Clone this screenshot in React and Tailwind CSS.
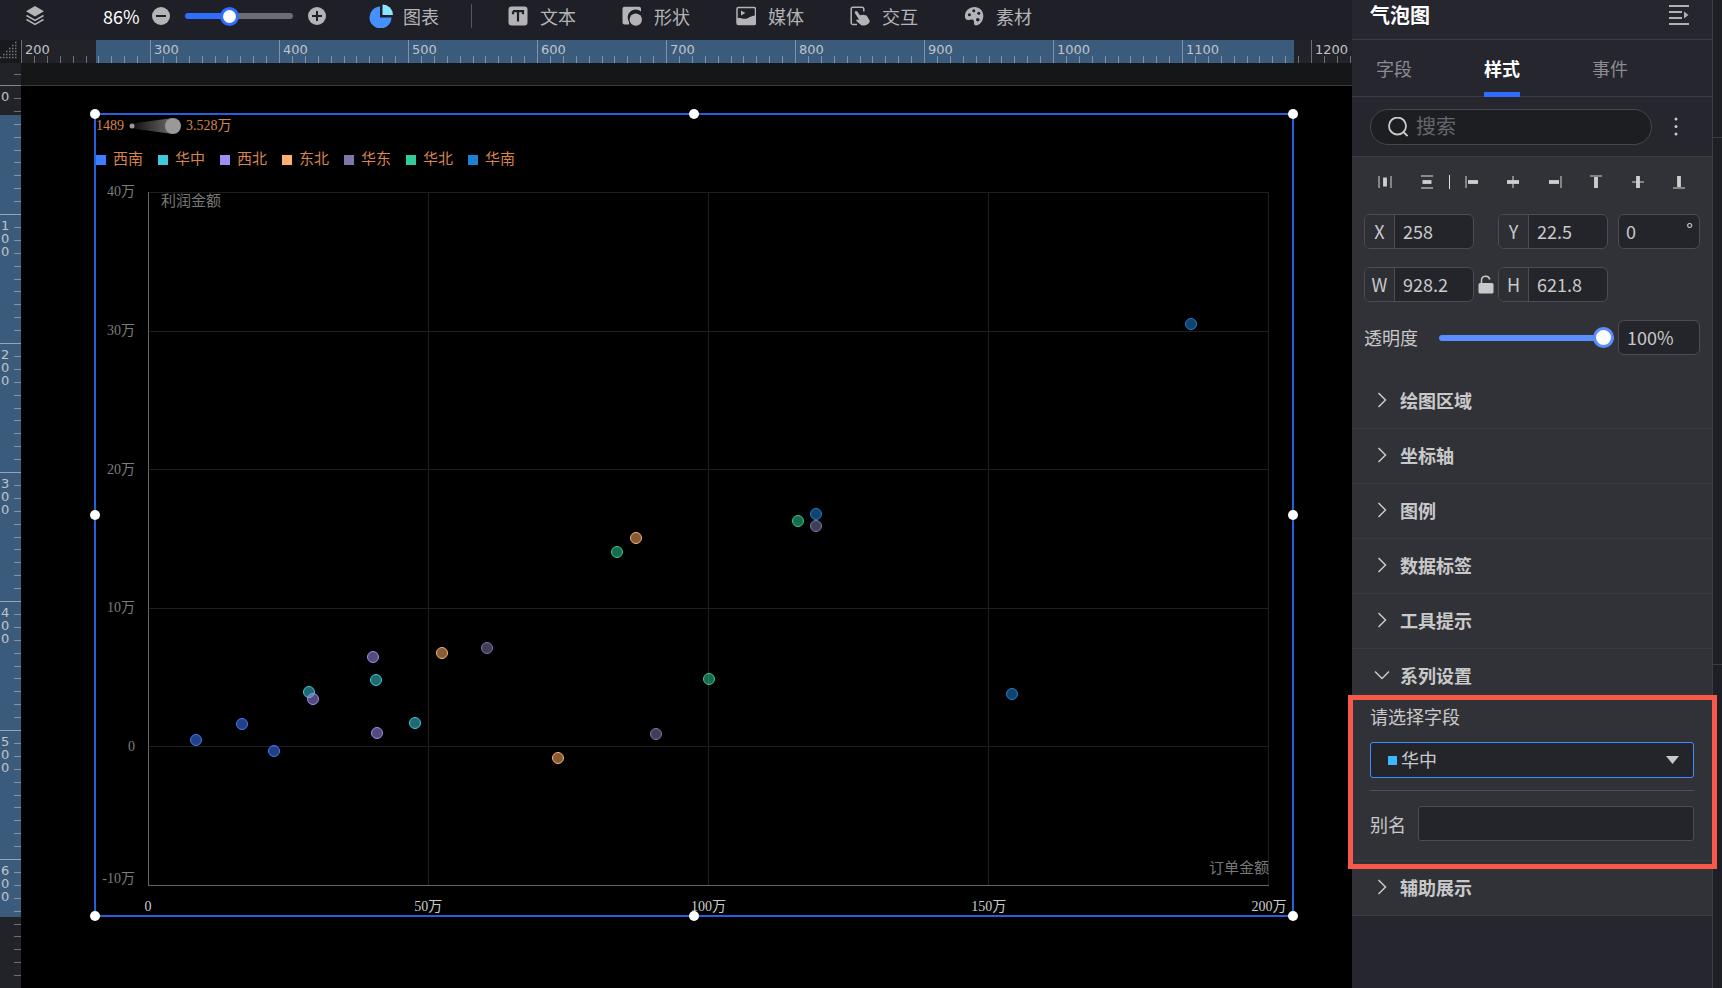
import { useState } from "react";

const SERIES = [
  { name: "西南", color: "#3d7dff", points: [[8.5, 0.5], [16.7, 1.7], [22.4, -0.24]] },
  { name: "华中", color: "#3ec8db", points: [[28.7, 3.97], [40.6, 4.83], [47.6, 1.77]] },
  { name: "西北", color: "#a08ff2", points: [[29.4, 3.44], [40.2, 6.52], [40.8, 1]] },
  { name: "东北", color: "#ffb06c", points: [[52.5, 6.76], [73.1, -0.81], [87.1, 15.07]] },
  { name: "华东", color: "#7c78a8", points: [[60.4, 7.14], [90.7, 0.96], [119.1, 15.93]] },
  { name: "华北", color: "#32cc96", points: [[83.6, 14.07], [116, 16.33], [100, 4.94]] },
  { name: "华南", color: "#2080d0", points: [[119.1, 16.83], [154.2, 3.86], [186, 30.5]] },
];

const Y_TICKS = ["40万", "30万", "20万", "10万", "0", "-10万"];
const X_TICKS = ["0", "50万", "100万", "150万", "200万"];

const TOOLS = [
  { name: "文本", icon: TextIcon },
  { name: "形状", icon: ShapeIcon },
  { name: "媒体", icon: MediaIcon },
  { name: "交互", icon: InteractIcon },
  { name: "素材", icon: PaletteIcon },
];

const TABS = ["字段", "样式", "事件"];
const SECTIONS = ["绘图区域", "坐标轴", "图例", "数据标签", "工具提示"];
const TEN = [0, 1, 2, 3, 4, 5, 6, 7, 8, 9];

function TextIcon() {
  return (
    <svg viewBox="0 0 20 20" className="size-5" aria-hidden="true">
      <rect x="0.500" y="0.500" width="19" height="19" rx="3" fill="currentColor" />
      <path d="M5 5.200h10v3M5 5.200v3M10 5.200V15.500" fill="none" stroke="#1e1f27" strokeWidth="2.200" />
    </svg>
  );
}

function ShapeIcon() {
  return (
    <svg viewBox="0 0 20 20" className="size-5" fill="currentColor" aria-hidden="true">
      <path d="M2.500.8h14.500a2 2 0 0 1 2 2v2.800A8 8 0 0 0 7 16v2.500H2.500a2 2 0 0 1-2-2v-13.700a2 2 0 0 1 2-2z" />
      <circle cx="13.800" cy="13.600" r="6.200" />
    </svg>
  );
}

function MediaIcon() {
  return (
    <svg viewBox="0 0 20 20" className="size-5" fill="currentColor" aria-hidden="true">
      <rect x="1" y="1.500" width="18.500" height="17" rx="1.600" fill="none" stroke="currentColor" strokeWidth="1.500" />
      <path d="M5 4.600v4.800L9.400 7z" />
      <path d="M1 12.400c3-1 5 .4 8 .4s5-3 10.500-3.400V18.500H1z" />
    </svg>
  );
}

function InteractIcon() {
  return (
    <svg viewBox="0 0 20 20" className="size-5" aria-hidden="true">
      <path
        d="M7 18.500H3a1.800 1.800 0 0 1-1.800-1.800V3A1.800 1.800 0 0 1 3 1.200h9A1.800 1.800 0 0 1 13.800 3v2.500"
        fill="none"
        stroke="currentColor"
        strokeWidth="1.500"
      />
      <path
        d="M5.200 5.400c.8-.6 1.600-.4 2.200.4l2.800 3.800c1-1 1.900-.9 2.500-.4.8-.6 1.700-.5 2.200.1 1-.4 1.800 0 2.100.8l2.400 4.200c.5 1.200.3 2-.4 2.800-1.300 1.400-3.200 2.500-5.400 2.400-1.600 0-2.600-.6-3.800-1.600l-3.200-2.700c-.8-.8 0-1.900 1-1.700l1.700.5-4.300-6.800c-.4-.7-.3-1.500.2-1.800z"
        fill="currentColor"
      />
    </svg>
  );
}

function PaletteIcon() {
  return (
    <svg viewBox="0 0 20 20" className="size-5" aria-hidden="true">
      <path
        d="M10.500 1c5 0 8.800 3.800 8.800 8.700 0 4.500-2.500 8.500-6.300 9.600-2 .4-3.200-.8-3-2.600.2-1.700-.4-2.900-2-3.100-1.400-.2-2.300.6-3.800.5C1.800 14 .8 12 .9 9.900 1.100 4.800 5.400 1 10.500 1z"
        fill="currentColor"
      />
      <g fill="#1e1f27">
        <circle cx="5.400" cy="8.800" r="1.500" />
        <circle cx="9.800" cy="4.800" r="1.500" />
        <circle cx="14.800" cy="7.200" r="1.500" />
        <circle cx="13.800" cy="13.800" r="1.800" />
      </g>
    </svg>
  );
}

function TopBar({ zoom, setZoom }) {
  return (
    <header className="flex h-10 items-center bg-[#1e1f27] pb-2 text-lg text-[#b4b4b6]">
      <button aria-label="图层" className="ml-[25px]">
        <svg viewBox="0 0 20 20" className="size-5" aria-hidden="true">
          <path d="M10 0l9 5.200-9 5.300-9-5.300z" fill="currentColor" />
          <path d="M1.500 9.500l8.500 5 8.500-5M1.500 13.500l8.500 5 8.500-5" fill="none" stroke="currentColor" strokeWidth="1.500" />
        </svg>
      </button>
      <span className="ml-[58px] w-9 text-white">86%</span>
      <div className="ml-3 flex items-center gap-[14px]">
        <button aria-label="缩小">
          <svg viewBox="0 0 20 20" className="size-5" aria-hidden="true">
            <circle cx="10" cy="10" r="9" fill="currentColor" />
            <path d="M5 10h10" stroke="#1e1f27" strokeWidth="2" />
          </svg>
        </button>
        <input
          type="range"
          aria-label="缩放"
          value={zoom}
          onChange={(e) => setZoom(e.target.value)}
          className="h-1.5 w-[108px] appearance-none rounded-full bg-[linear-gradient(to_right,#2f6dff_41%,#6b6d75_41%)] [&::-webkit-slider-thumb]:size-[19px] [&::-webkit-slider-thumb]:appearance-none [&::-webkit-slider-thumb]:rounded-full [&::-webkit-slider-thumb]:border-[3px] [&::-webkit-slider-thumb]:border-[#2f6dff] [&::-webkit-slider-thumb]:bg-white"
        />
        <button aria-label="放大">
          <svg viewBox="0 0 20 20" className="size-5" aria-hidden="true">
            <circle cx="10" cy="10" r="9" fill="currentColor" />
            <path d="M5 10h10M10 5v10" stroke="#1e1f27" strokeWidth="2" />
          </svg>
        </button>
      </div>
      <button className="ml-[42px] flex items-center gap-[10px]">
        <svg viewBox="0 0 24 24" className="size-6" aria-hidden="true">
          <path d="M11 2.400V13.500h11.500A11 11 0 1 1 11 2.400z" fill="#4591ff" />
          <path d="M13.500 0.500A10.500 10.500 0 0 1 24 11H13.500z" fill="#8ce6ff" />
        </svg>
        图表
      </button>
      <div className="ml-8 h-6 w-px bg-[#55565c]" />
      <nav className="ml-9 flex gap-[46px]">
        {TOOLS.map((tool) => (
          <button key={tool.name} className="flex items-center gap-3">
            <tool.icon />
            {tool.name}
          </button>
        ))}
      </nav>
    </header>
  );
}

function TopRuler() {
  const labels = [200, 300, 400, 500, 600, 700, 800, 900, 1000, 1100, 1200];
  return (
    <div className="flex h-[23px] bg-[#222328]">
      <div className="w-[21px] shrink-0 bg-[#18191c]">
        <svg viewBox="0 0 21 23" className="h-full w-full" aria-hidden="true">
          <path
            d="M0 17.500h18M3 14.500h15M6 11.500h12M9 8.500h9M12 5.500h6M15 2.500h3"
            stroke="#77787c"
            strokeWidth="1.500"
            strokeDasharray="1.500 1.500"
          />
        </svg>
      </div>
      <div className="relative min-w-0 flex-1 overflow-hidden">
        <div className="absolute inset-y-0 right-[58px] left-[75px] bg-[#3b5b7d]" />
        <div className="relative flex h-full">
          {labels.map((label) => (
            <div key={label} className="relative flex w-[129px] shrink-0 items-end">
              {TEN.map((n) => (
                <i key={n} className="h-[7px] flex-1 border-l border-white/35 first:h-full" />
              ))}
              <span className="absolute top-[2px] left-1 font-['DejaVu_Sans',sans-serif] text-[13px] leading-4 text-[#c0c3c8]">
                {label}
              </span>
            </div>
          ))}
        </div>
      </div>
    </div>
  );
}

function SideRuler() {
  const labels = [0, 100, 200, 300, 400, 500, 600];
  return (
    <div className="relative w-[21px] shrink-0 overflow-hidden bg-[#222328]">
      <div className="absolute inset-x-0 top-[52px] bottom-[71px] bg-[#3b5b7d]" />
      <div className="absolute inset-0 flex flex-col">
        <div className="flex h-[22px] shrink-0 flex-col items-end justify-center">
          <i className="w-[7px] border-t border-white/35" />
        </div>
        {labels.map((label) => (
          <div key={label} className="relative flex h-[129px] shrink-0 flex-col items-end">
            {TEN.map((n) => (
              <i key={n} className="w-[7px] flex-1 border-t border-white/35 first:w-full first:border-white/45" />
            ))}
            <span className="absolute top-[5px] left-px w-2 font-['DejaVu_Sans',sans-serif] text-[13px] leading-[13px] break-all text-[#c0c3c8]">
              {label}
            </span>
          </div>
        ))}
      </div>
    </div>
  );
}

function BubbleChart() {
  return (
    <div className="flex flex-1 flex-col font-['Liberation_Serif','Noto_Sans_CJK_SC',serif] text-sm">
      <div className="flex h-[22px] items-center text-[#d98450]">
        <span>1489</span>
        <svg viewBox="0 0 52 18" className="mx-[5px] h-[18px] w-[52px]" aria-hidden="true">
          <defs>
            <linearGradient id="sizeRange">
              <stop offset="0" stopColor="#999" stopOpacity="0.1" />
              <stop offset="1" stopColor="#999" stopOpacity="0.7" />
            </linearGradient>
          </defs>
          <path d="M3 6.500L44 1v16L3 11.500z" fill="url(#sizeRange)" />
          <circle cx="3" cy="9" r="2.500" fill="#999" />
          <circle cx="44" cy="9" r="8" fill="#999" />
        </svg>
        <span>3.528万</span>
      </div>
      <ul className="mt-3 flex h-[22px] items-center gap-[15px] text-[15px] text-[#d98450]">
        {SERIES.map((s) => (
          <li key={s.name} className="flex items-center gap-[7px]">
            <i className="size-[10px]" style={{ backgroundColor: s.color }} />
            {s.name}
          </li>
        ))}
      </ul>
      <div className="mt-[21px] flex flex-1 pr-[23px]">
        <div className="flex w-[52px] flex-col justify-between pr-[13px] leading-none text-[#7c7c7c]">
          {Y_TICKS.map((t) => (
            <span key={t} className="flex h-0 items-center justify-end last:items-end">
              {t}
            </span>
          ))}
        </div>
        <div className="relative flex flex-1">
          <div className="grid flex-1 grid-cols-4 grid-rows-5 border-b border-l border-[#666]">
            {Array.from({ length: 20 }, (_, i) => (
              <div key={i} className="border-t border-r border-[#1e1e1e]" />
            ))}
          </div>
          <span className="absolute top-0 left-[13px] text-[15px] leading-[18px] text-[#777]">利润金额</span>
          <span className="absolute right-0 bottom-2 text-[15px] leading-5 text-[#777]">订单金额</span>
          {SERIES.map((s) =>
            s.points.map(([x, y]) => (
              <i
                key={`${s.name}-${x}`}
                className="absolute size-3 -translate-x-1/2 translate-y-1/2 rounded-full border"
                style={{
                  left: `${x / 2}%`,
                  bottom: `${(y + 10) * 2}%`,
                  borderColor: s.color,
                  backgroundColor: `${s.color}85`,
                }}
              />
            ))
          )}
        </div>
      </div>
      <div className="flex h-[29px] justify-between pt-[14px] pr-[23px] pl-[52px] leading-none whitespace-nowrap text-[#ccc]">
        {X_TICKS.map((t) => (
          <span key={t} className="flex w-0 justify-center">
            {t}
          </span>
        ))}
      </div>
    </div>
  );
}

function Handles() {
  return (
    <>
      <i className="absolute -top-1.5 -left-1.5 size-[10px] rounded-full bg-white" />
      <i className="absolute -top-1.5 left-1/2 size-[10px] -translate-x-1/2 rounded-full bg-white" />
      <i className="absolute -top-1.5 -right-1.5 size-[10px] rounded-full bg-white" />
      <i className="absolute top-1/2 -left-1.5 size-[10px] -translate-y-1/2 rounded-full bg-white" />
      <i className="absolute top-1/2 -right-1.5 size-[10px] -translate-y-1/2 rounded-full bg-white" />
      <i className="absolute -bottom-1.5 -left-1.5 size-[10px] rounded-full bg-white" />
      <i className="absolute -bottom-1.5 left-1/2 size-[10px] -translate-x-1/2 rounded-full bg-white" />
      <i className="absolute -right-1.5 -bottom-1.5 size-[10px] rounded-full bg-white" />
    </>
  );
}

const ALIGN_ICONS = [
  { name: "水平分布", line: "M2 3v12M14 3v12", bar: "M8 4.500v9" },
  { name: "垂直分布", line: "M2 3h12M2 15h12", bar: "M3.500 9h9" },
  { name: "左对齐", line: "M2 3v12", bar: "M4 9h10" },
  { name: "水平居中", line: "M8 3v12", bar: "M2 9h12" },
  { name: "右对齐", line: "M14 3v12", bar: "M2 9h10" },
  { name: "顶对齐", line: "M2 3h12", bar: "M8 4v11" },
  { name: "垂直居中", line: "M2 9h12", bar: "M8 3v12" },
  { name: "底对齐", line: "M2 15h12", bar: "M8 3v11" },
];

function AlignButton({ icon }) {
  return (
    <button aria-label={icon.name}>
      <svg viewBox="0 0 16 18" className="h-[18px] w-4" fill="none" aria-hidden="true">
        <path d={icon.line} stroke="#a7a8ab" strokeWidth="1.400" />
        <path d={icon.bar} stroke="#cfcfd0" strokeWidth="3.800" />
      </svg>
    </button>
  );
}

function NumberBox({ label, value }) {
  return (
    <label className="flex h-[35px] w-[110px] overflow-hidden rounded-md border border-[#4c4d52] bg-[#24252a]">
      <span className="flex w-[30px] shrink-0 items-center justify-center border-r border-[#4c4d52] bg-[#2e2f34] pb-0.5">
        {label}
      </span>
      <input defaultValue={value} className="w-full min-w-0 bg-transparent pb-0.5 pl-2 outline-none" />
    </label>
  );
}

function SectionRow({ title, open }) {
  return (
    <button className="flex h-[55px] w-full items-center border-b border-[#3a3b41] pb-0.5 pl-[22px] font-bold">
      <svg viewBox="0 0 16 16" className="size-4" fill="none" stroke="currentColor" strokeWidth="1.500" aria-hidden="true">
        <path d={open ? "M1 4.500l7 7 7-7" : "M4.500 1l7 7-7 7"} />
      </svg>
      <span className="ml-[10px]">{title}</span>
    </button>
  );
}

function StylePanel() {
  const [tab, setTab] = useState("样式");
  const [field, setField] = useState("华中");
  const [opacity, setOpacity] = useState(100);

  return (
    <aside className="w-[361px] shrink-0 border-r border-[#3c3d43] bg-[#25262e] text-lg text-[#c9c9ca]">
      <div className="flex h-10 items-center justify-between border-b border-[#3c3d43] pr-[23px] pb-2.5 pl-[18px]">
        <h1 className="text-xl font-bold text-white">气泡图</h1>
        <button aria-label="收起">
          <svg viewBox="0 0 20 22" className="h-[22px] w-5" aria-hidden="true">
            <path d="M0 2h20M0 8h13M0 14h13M0 20h20" stroke="#b0b1b4" strokeWidth="1.800" />
            <path d="M15 7.500l4.500 3.500-4.500 3.500z" fill="#b0b1b4" />
          </svg>
        </button>
      </div>
      <div role="tablist" className="flex h-[57px] gap-[72px] border-b border-[#3c3d43] pl-6">
        {TABS.map((t) => (
          <button
            key={t}
            role="tab"
            aria-selected={tab === t}
            onClick={() => setTab(t)}
            className={
              tab === t
                ? "-mb-px border-b-[5px] border-[#2f6dff] pt-[3px] font-bold text-white"
                : "-mb-px border-b-[5px] border-transparent pt-[3px] text-[#8b8c91]"
            }
          >
            {t}
          </button>
        ))}
      </div>
      <div className="flex h-[60px] items-center border-b border-[#3c3d43] pl-[18px]">
        <label className="flex h-9 w-[282px] items-center rounded-full border border-[#46474c] bg-[#1d1e22] pl-[17px]">
          <svg viewBox="0 0 20 20" className="size-5 shrink-0" fill="none" stroke="#c9c9ca" strokeWidth="1.800" aria-hidden="true">
            <circle cx="9.500" cy="9" r="8.500" />
            <path d="M15.500 15l4 4" />
          </svg>
          <input
            aria-label="搜索"
            placeholder="搜索"
            className="ml-2 w-full min-w-0 bg-transparent pb-0.5 text-xl outline-none placeholder:text-[#66676b]"
          />
        </label>
        <button aria-label="更多" className="ml-[22px]">
          <svg viewBox="0 0 4 20" className="h-5 w-1" fill="#c9c9ca" aria-hidden="true">
            <circle cx="2" cy="2" r="1.500" />
            <circle cx="2" cy="9.500" r="1.500" />
            <circle cx="2" cy="17" r="1.500" />
          </svg>
        </button>
      </div>

      <div className="bg-[#313237]">
        <div className="flex h-[57px] items-center justify-between px-[25px] pb-2">
          <AlignButton icon={ALIGN_ICONS[0]} />
          <div className="flex items-center gap-[14px]">
            <AlignButton icon={ALIGN_ICONS[1]} />
            <i className="h-[14px] w-px bg-[#e0e0e0]" />
            <AlignButton icon={ALIGN_ICONS[2]} />
          </div>
          {ALIGN_ICONS.slice(3).map((icon) => (
            <AlignButton key={icon.name} icon={icon} />
          ))}
        </div>
        <div className="flex px-3">
          <NumberBox label="X" value="258" />
          <div className="w-6" />
          <NumberBox label="Y" value="22.5" />
          <label className="ml-auto flex h-[35px] w-[82px] rounded-md border border-[#4c4d52] bg-[#24252a] pr-1.5 pl-[7px]">
            <input aria-label="旋转" defaultValue="0" className="w-full min-w-0 bg-transparent pb-0.5 outline-none" />
            <span>°</span>
          </label>
        </div>
        <div className="mt-[18px] flex items-center pl-3">
          <NumberBox label="W" value="928.2" />
          <button aria-label="锁定比例" className="flex w-6 justify-center">
            <svg viewBox="0 0 16 20" className="h-5 w-4" aria-hidden="true">
              <rect x="0.500" y="8" width="15" height="10.500" rx="1.500" fill="currentColor" />
              <path d="M3.500 8V5.500a4.200 4.200 0 0 1 8.300-1" fill="none" stroke="currentColor" strokeWidth="1.500" />
            </svg>
          </button>
          <NumberBox label="H" value="621.8" />
        </div>
        <div className="mt-[18px] flex h-[54px] items-start px-3">
          <label htmlFor="opacity" className="leading-[35px]">透明度</label>
          <div className="flex h-[35px] flex-1 items-center pr-1 pl-[21px]">
            <input
              id="opacity"
              type="range"
              value={opacity}
              onChange={(e) => setOpacity(e.target.value)}
              className="h-1.5 w-full appearance-none rounded-full bg-[#5a8dff] [&::-webkit-slider-thumb]:size-[21px] [&::-webkit-slider-thumb]:appearance-none [&::-webkit-slider-thumb]:rounded-full [&::-webkit-slider-thumb]:border-[3px] [&::-webkit-slider-thumb]:border-[#5a8dff] [&::-webkit-slider-thumb]:bg-white"
            />
          </div>
          <input
            aria-label="透明度数值"
            value={`${opacity}%`}
            readOnly
            className="h-[35px] w-[82px] rounded-md border border-[#4c4d52] bg-[#24252a] pb-0.5 pl-2 outline-none"
          />
        </div>

        {SECTIONS.map((title) => (
          <SectionRow key={title} title={title} />
        ))}

        <div className="[&>button]:border-transparent">
          <SectionRow title="系列设置" open />
        </div>
        <div className="relative h-[157px] border-b border-[#3a3b41] px-[18px]">
          <label htmlFor="series" className="block leading-6">请选择字段</label>
          <div className="relative mt-[14px]">
            <i className="absolute top-[14px] left-[18px] size-[9px] bg-[#3cb6ff]" />
            <select
              id="series"
              value={field}
              onChange={(e) => setField(e.target.value)}
              className="h-9 w-full appearance-none rounded-[3px] border border-[#3f8cff] bg-[#24252a] pb-0.5 pl-[30px] leading-7 outline-none"
            >
              {SERIES.map((s) => (
                <option key={s.name}>{s.name}</option>
              ))}
            </select>
            <svg viewBox="0 0 13 8" className="absolute top-[14px] right-[15px] h-2 w-[13px]" fill="currentColor" aria-hidden="true">
              <path d="M0 0h13L6.500 8z" />
            </svg>
          </div>
          <hr className="mt-3 border-[#505156]" />
          <label className="mt-[15px] flex items-center gap-3 whitespace-nowrap">
            别名
            <input className="h-[35px] w-full min-w-0 rounded-[3px] border border-[#4c4d52] bg-[#24252a] px-2 outline-none" />
          </label>
          <div className="pointer-events-none absolute -top-[9px] -right-[5px] -bottom-[9px] -left-1 border-[5px] border-[#f9594a]" />
        </div>
        <SectionRow title="辅助展示" />
      </div>
    </aside>
  );
}

export default function App() {
  const [zoom, setZoom] = useState(39);

  return (
    <div className="flex min-h-screen overflow-hidden bg-[#1d1e26] font-['Noto_Sans_CJK_SC',sans-serif]">
      <div className="flex min-w-0 flex-1 flex-col">
        <TopBar zoom={zoom} setZoom={setZoom} />
        <TopRuler />
        <div className="flex flex-1">
          <SideRuler />
          <main className="flex min-w-0 flex-1 flex-col bg-black">
            <div className="h-[23px] border-b border-[#38393b] bg-[#151618]" />
            <div className="flex flex-1 pt-[27px] pr-[58px] pb-[71px] pl-[73px]">
              <div className="relative flex flex-1 border-2 border-[#265fe0]">
                <BubbleChart />
                <Handles />
              </div>
            </div>
          </main>
        </div>
      </div>
      <StylePanel />
      <div className="flex w-[9px] shrink-0 flex-col">
        <div className="h-[138px] border-b border-[#3c3d43]" />
        <div className="h-[527px] border-b border-[#3c3d43]" />
      </div>
    </div>
  );
}
